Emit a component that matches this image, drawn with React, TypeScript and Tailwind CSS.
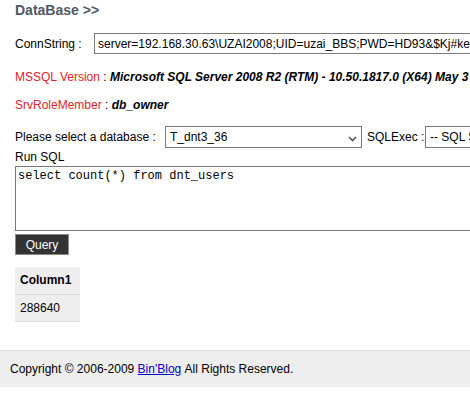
import React from "react";

const Chevron = () => (
  <svg width="9" height="6" viewBox="0 0 9 6" className="absolute right-[4px] top-[9px]">
    <path d="M1 1 L4.5 4.5 L8 1" fill="none" stroke="#555" strokeWidth="1.6" />
  </svg>
);

export default function App() {
  return (
    <div className="w-full min-h-[405px] overflow-hidden bg-white text-[12px] text-black font-['Liberation_Sans',Arial,sans-serif]">
      <div className="pl-[15px]">
        <div className="h-[20px] flex items-center text-[14px] font-bold text-[#4f5864]">DataBase &gt;&gt;</div>

        <div className="mt-[13px] flex items-center h-[21px] whitespace-nowrap">
          <span className="w-[79px] shrink-0">ConnString :</span>
          <input
            readOnly
            value="server=192.168.30.63\UZAI2008;UID=uzai_BBS;PWD=HD93&$Kj#ke2010;database=master"
            className="h-[21px] w-[600px] shrink-0 border border-[#7a7a7a] px-[3px] text-[12px] outline-none"
          />
        </div>

        <div className="mt-[13px] h-[20px] flex items-center whitespace-nowrap">
          <span className="text-[#e3232b]">MSSQL Version</span>
          <span>&nbsp;:&nbsp;</span>
          <span className="font-bold italic">Microsoft SQL Server 2008 R2 (RTM) - 10.50.1817.0 (X64) May 3 2010 11:13:43</span>
        </div>

        <div className="mt-[8px] h-[20px] flex items-center whitespace-nowrap">
          <span className="text-[#e3232b]">SrvRoleMember</span>
          <span>&nbsp;:&nbsp;</span>
          <span className="font-bold italic">db_owner</span>
        </div>

        <div className="mt-[11px] h-[22px] flex items-center whitespace-nowrap">
          <span className="w-[150px] shrink-0">Please select a database :</span>
          <div className="relative h-[22px] w-[197px] shrink-0 border border-[#7a7a7a] pl-[4px] flex items-center">
            T_dnt3_36
            <Chevron />
          </div>
          <span className="ml-[5px] w-[58px] shrink-0">SQLExec :</span>
          <div className="relative h-[22px] w-[160px] shrink-0 border border-[#7a7a7a] pl-[4px] flex items-center">
            -- SQL Server Exec --
            <Chevron />
          </div>
        </div>

        <div className="h-[18px] flex items-center">Run SQL</div>

        <textarea
          readOnly
          value="select count(*) from dnt_users"
          className="block h-[65px] w-[600px] resize-none border border-[#7a7a7a] px-[2px] py-[2px] font-['Liberation_Mono','Courier_New',monospace] text-[12px] leading-[14px] outline-none"
        />

        <button className="mt-[3px] h-[21px] w-[54px] border border-[#8a8a8a] bg-[#333333] text-[12px] text-white">
          Query
        </button>

        <table className="mt-[12px] border-collapse bg-[#eeeeee]">
          <tbody>
            <tr>
              <th className="h-[27px] w-[65px] border-b border-[#d8d8d8] pl-[5px] text-left font-bold">Column1</th>
            </tr>
            <tr>
              <td className="h-[27px] border-b border-[#e2e2e2] pl-[5px]">288640</td>
            </tr>
          </tbody>
        </table>
      </div>

      <div className="mt-[28px] h-[37px] border-t border-[#dddddd] bg-[#eeeeee] pl-[10px] flex items-center whitespace-nowrap">
        Copyright © 2006-2009&nbsp;<a href="#" className="text-[#0000cc] underline">Bin'Blog</a>&nbsp;All Rights Reserved.
      </div>
    </div>
  );
}
